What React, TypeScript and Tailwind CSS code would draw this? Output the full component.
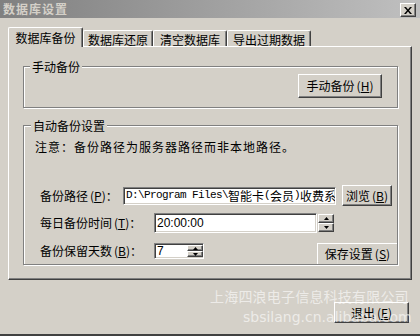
import React from 'react';

const raised =
  'border border-t-white border-l-white border-r-[#404040] border-b-[#404040] shadow-[inset_-1px_-1px_0_#808080] bg-[#d4d0c8]';
const sunken =
  'border border-t-[#808080] border-l-[#808080] border-r-white border-b-white shadow-[inset_1px_1px_0_#404040,inset_-1px_-1px_0_#d4d0c8] bg-white';
const etched = 'border border-[#808080] shadow-[inset_1px_1px_0_#fff,1px_1px_0_#fff]';

const Key = ({ k }: { k: string }) => (
  <span className="ml-[2px]">
    (<span className="underline">{k}</span>)
  </span>
);

const Arrow = ({ up }: { up?: boolean }) => (
  <svg width="5" height="3" viewBox="0 0 5 3">
    <polygon points={up ? '2.5,0 5,3 0,3' : '0,0 5,0 2.5,3'} fill="#000" />
  </svg>
);

const Spinner = ({ h }: { h: string }) => (
  <div className={`flex flex-col w-[16px] ${h}`}>
    <div className={`${raised} flex-1 flex items-center justify-center`}>
      <Arrow up />
    </div>
    <div className={`${raised} flex-1 flex items-center justify-center`}>
      <Arrow />
    </div>
  </div>
);

const Tab = ({ label, width, active }: { label: string; width: string; active?: boolean }) =>
  active ? (
    <div
      className={`${width} relative z-10 h-[20px] -mb-px flex items-center justify-center bg-[#d4d0c8] border-t border-l border-t-white border-l-white border-r border-r-[#404040] shadow-[inset_-1px_0_0_#808080] rounded-t-[2px]`}
    >
      {label}
    </div>
  ) : (
    <div
      className={`${width} h-[16px] pt-[2px] flex items-center justify-center border-t border-l border-t-white border-l-white border-r border-r-[#404040] shadow-[inset_-1px_0_0_#808080] rounded-t-[2px]`}
    >
      {label}
    </div>
  );

const App = () => {
  return (
    <div className="relative w-[420px] h-[336px] overflow-hidden bg-[#d4d0c8] border-b-2 border-b-[#404040] text-[12px] text-black font-['Noto_Sans_CJK_SC',sans-serif]">
      {/* title bar */}
      <div className="h-[18px] flex justify-between bg-gradient-to-r from-[#808080] to-[#c0c0c0]">
        <span className="pl-[3px] leading-[18px] font-bold tracking-[1px] text-[#d4d0c8]">数据库设置</span>
        <div className={`${raised} mt-[3px] mr-[4px] w-[16px] h-[14px] flex items-center justify-center`}>
          <svg width="8" height="7" viewBox="0 0 8 7">
            <path d="M0 0h2l2 2.5L6 0h2L5 3.5 8 7H6L4 4.5 2 7H0l3-3.5z" fill="#000" />
          </svg>
        </div>
      </div>

      {/* tabs */}
      <div className="mt-[9px] ml-2 h-[19px] flex items-end">
        <Tab label="数据库备份" width="w-[75px]" active />
        <Tab label="数据库还原" width="w-[70px]" />
        <Tab label="清空数据库" width="w-[74px]" />
        <Tab label="导出过期数据" width="w-[84px]" />
      </div>

      {/* panel */}
      <div className="mx-2 h-[234px] border border-t-white border-l-white border-r-[#404040] border-b-[#404040] shadow-[inset_-1px_-1px_0_#808080]">
        <div className={`${etched} mt-[19px] ml-[14px] w-[375px]`}>
          <div className="-mt-[7px] ml-[6px] px-[2px] w-fit leading-[14px] bg-[#d4d0c8]">手动备份</div>
          <div className="flex justify-end pr-[15px] pb-[9px]">
            <div className={`${raised} w-[84px] h-[24px] flex items-center justify-center`}>
              手动备份
              <Key k="H" />
            </div>
          </div>
        </div>

        <div className={`${etched} mt-[17px] ml-[14px] w-[375px]`}>
          <div className="-mt-[7px] ml-[7px] px-[2px] w-fit leading-[14px] bg-[#d4d0c8]">自动备份设置</div>
          <div className="mt-[7px] ml-[11px] leading-[14px] tracking-[1px]">注意：备份路径为服务器路径而非本地路径。</div>

          <div className="mt-[31px] pl-[16px] h-[21px] flex items-center">
            <div className="w-[83px] whitespace-nowrap">
              备份路径
              <Key k="P" />：
            </div>
            <div className={`${sunken} w-[213px] h-[18px] pl-[2px] flex items-center overflow-hidden whitespace-nowrap`}>
              <span className="font-['Liberation_Mono',monospace] text-[11px] tracking-[-0.6px]">D:\Program Files\</span>
              <span>智能卡</span>
              <span className="font-['Liberation_Mono',monospace] text-[11px] tracking-[-0.6px]">(</span>
              <span>会员</span>
              <span className="font-['Liberation_Mono',monospace] text-[11px] tracking-[-0.6px]">)</span>
              <span>收费系统</span>
            </div>
            <div className={`${raised} ml-[6px] w-[50px] h-[21px] flex items-center justify-center`}>
              浏览
              <Key k="B" />
            </div>
          </div>

          <div className="mt-[7px] pl-[16px] h-[20px] flex items-center">
            <div className="w-[114px] whitespace-nowrap">
              每日备份时间
              <Key k="T" />：
            </div>
            <div className={`${sunken} w-[163px] h-[20px] pl-[2px] flex items-center font-['Liberation_Sans',sans-serif]`}>
              20:00:00
            </div>
            <div className="ml-px">
              <Spinner h="h-[18px]" />
            </div>
          </div>

          <div className="mt-[10px] pl-[16px] flex items-start">
            <div className="h-[16px] flex items-center">
              <div className="w-[114px] whitespace-nowrap">
                备份保留天数
                <Key k="B" />：
              </div>
              <div className={`${sunken} w-[50px] h-[16px] pl-[2px] flex items-center justify-between font-['Liberation_Sans',sans-serif]`}>
                7
                <Spinner h="h-[12px]" />
              </div>
            </div>
            <div className="ml-auto w-[80px] h-[21px] border-t border-l border-white flex items-center justify-center">
              保存设置
              <Key k="S" />
            </div>
          </div>
        </div>
      </div>

      {/* footer */}
      <div className="mt-[22px] mr-[11px] flex justify-end">
        <div className={`${raised} w-[75px] h-[21px] flex items-center justify-center`}>
          退出
          <Key k="E" />
        </div>
      </div>

      {/* watermark */}
      <div className="absolute left-[210px] top-[287px] text-[14px] leading-[18px] tracking-[0.2px] text-white/60 pointer-events-none">
        上海四浪电子信息科技有限公司
      </div>
      <div className="absolute left-[243px] top-[308px] text-[14px] leading-[18px] text-white/60 font-['DejaVu_Sans',sans-serif] pointer-events-none">
        sbsilang.cn.alibaba.com
      </div>
    </div>
  );
};

export default App;
